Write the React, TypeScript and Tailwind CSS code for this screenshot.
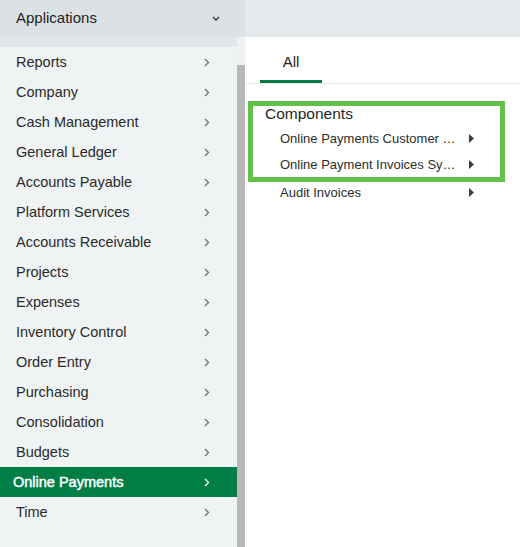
import React from 'react';

const modules = [
  'Reports',
  'Company',
  'Cash Management',
  'General Ledger',
  'Accounts Payable',
  'Platform Services',
  'Accounts Receivable',
  'Projects',
  'Expenses',
  'Inventory Control',
  'Order Entry',
  'Purchasing',
  'Consolidation',
  'Budgets',
  'Online Payments',
  'Time',
];

const ACTIVE = 'Online Payments';

function Chevron({ light }: { light?: boolean }) {
  return (
    <svg width="6" height="9" viewBox="0 0 6 9" className={light ? 'text-white' : 'text-[#6b6f73]'}>
      <polyline points="1,1 4.5,4.5 1,8" fill="none" stroke="currentColor" strokeWidth="1.3" />
    </svg>
  );
}

function Caret() {
  return (
    <svg width="5" height="9" viewBox="0 0 5 9" className="text-[#3a3d44]">
      <polygon points="0,0 5,4.5 0,9" fill="currentColor" />
    </svg>
  );
}

function ComponentRow({ label }: { label: string }) {
  return (
    <div className="flex items-center h-[26px] pl-[27px] pr-[26px]">
      <span className="flex-1 truncate text-[13px] text-[#2d2d2d] pt-[1px]">{label}</span>
      <span className="ml-3"><Caret /></span>
    </div>
  );
}

export default function App() {
  return (
    <div className="w-[520px] h-[547px] overflow-hidden bg-white font-['Liberation_Sans',Arial,sans-serif]">
      {/* Header */}
      <div className="flex h-[37px]">
        <div className="w-[245px] bg-[#dbe1e4] flex items-center pl-4 pr-[25px]">
          <span className="flex-1 text-[15px] text-[#1f1f1f]">Applications</span>
          <svg width="8" height="6" viewBox="0 0 8 6" className="text-[#333]">
            <polyline points="1,1 4,4 7,1" fill="none" stroke="currentColor" strokeWidth="1.3" />
          </svg>
        </div>
        <div className="flex-1 bg-[#e4e9ec]" />
      </div>

      <div className="flex h-[510px]">
        {/* Left menu */}
        <div className="w-[237px] flex flex-col bg-[#eff3f4]">
          <div className="h-[10px] bg-[#e1e7e9]" />
          {modules.map(m => {
            const active = m === ACTIVE;
            return (
              <div
                key={m}
                className={`flex items-center h-[30px] pr-[27px] ${active ? 'bg-[#007e45] pl-[13px]' : 'pl-4'}`}
              >
                <span
                  className={`flex-1 pt-[2px] text-[14.5px] ${active ? 'text-white [-webkit-text-stroke:0.45px_white]' : 'text-[#2a2a2a]'}`}
                >
                  {m}
                </span>
                <Chevron light={active} />
              </div>
            );
          })}
        </div>
        {/* Scrollbar */}
        <div className="w-[8px] flex flex-col bg-[#eef2f3]">
          <div className="h-[28px]" />
          <div className="flex-1 bg-[#b9b9b9]" />
        </div>

        {/* Right panel */}
        <div className="flex-1 flex flex-col">
          <div className="flex items-end h-[47px] pl-[15px] border-b border-[#e6e8ea]">
            <div className="w-[62px] flex flex-col items-center">
              <span className="text-[15px] text-[#1f1f1f] leading-none pb-[11px]">All</span>
              <div className="h-[3px] w-full bg-[#007e45]" />
            </div>
          </div>

          <div className="ml-[3px] mt-[17px] w-[257px] border-[5px] border-[#62c14a]">
            <div className="h-[19px] pl-[12px] text-[15.5px] text-[#1f1f1f] leading-[15px]">Components</div>
            <ComponentRow label="Online Payments Customer Information" />
            <ComponentRow label="Online Payment Invoices Sync Status" />
          </div>
          <div className="ml-[3px] w-[257px] px-[5px] -mt-[3px]">
            <ComponentRow label="Audit Invoices" />
          </div>
        </div>
      </div>
    </div>
  );
}
